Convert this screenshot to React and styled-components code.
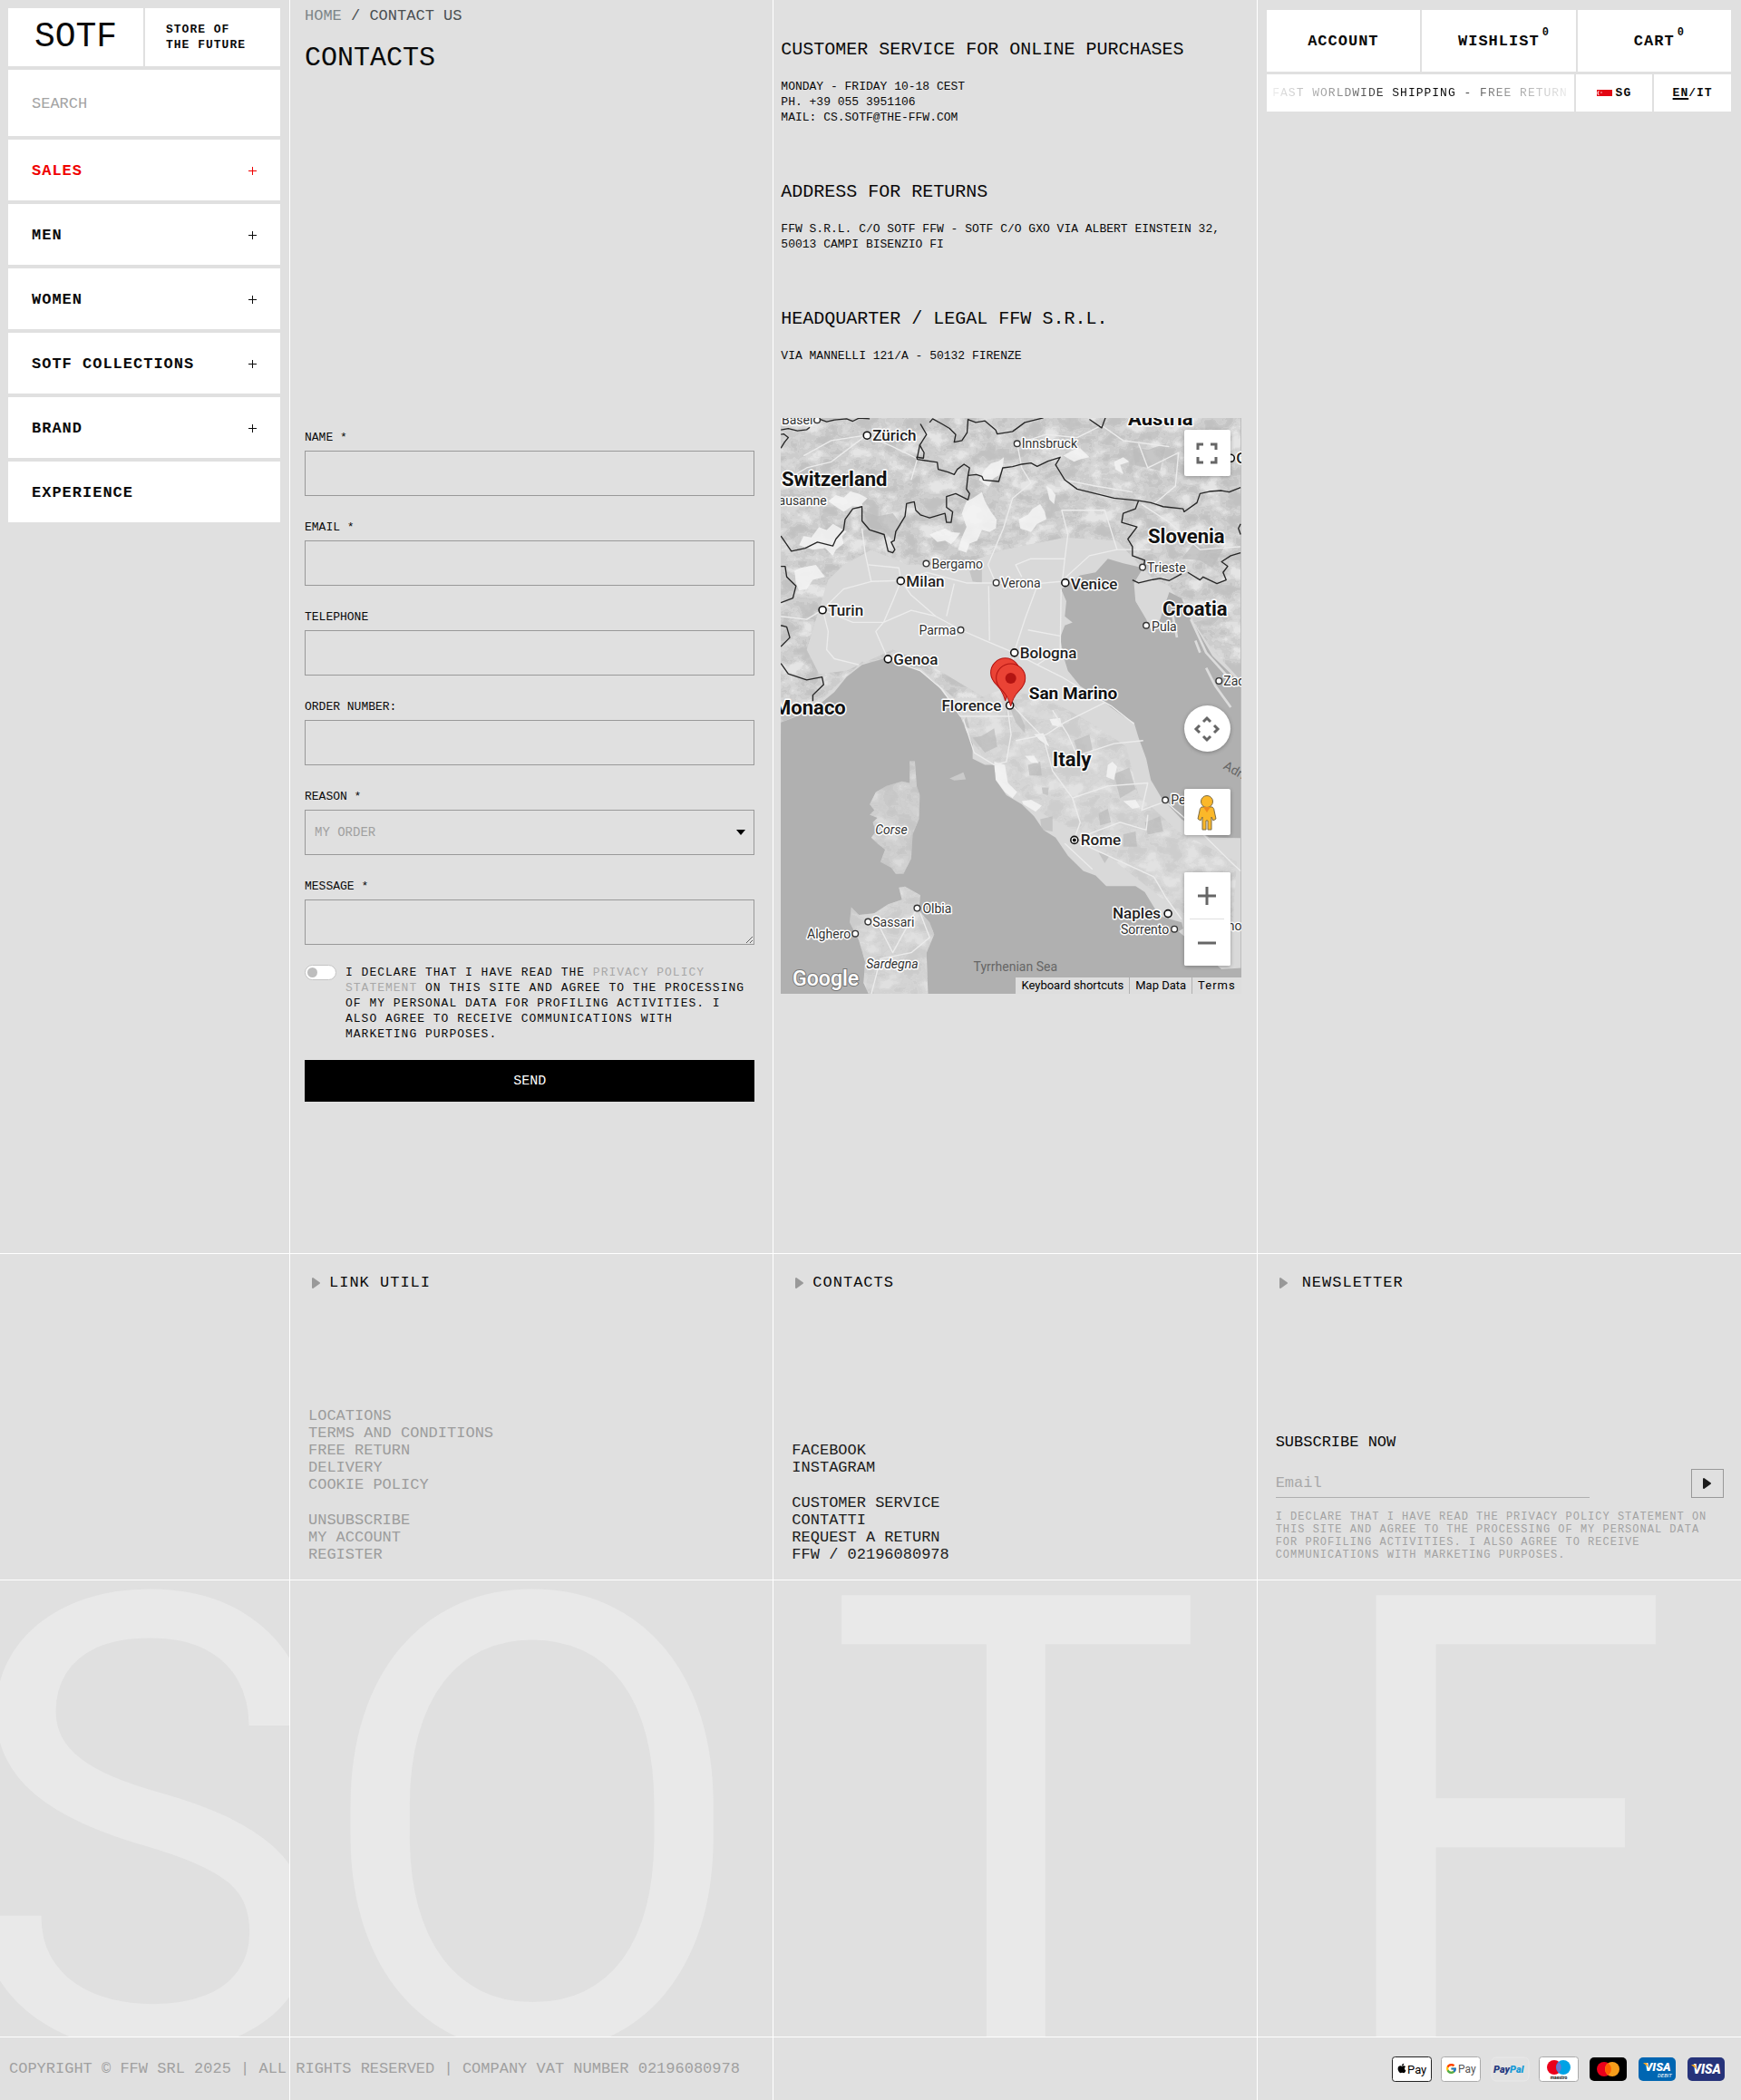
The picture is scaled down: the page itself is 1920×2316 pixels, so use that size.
import React from "react";
import styled, { createGlobalStyle, css } from "styled-components";
import { FaApple } from "react-icons/fa";
import { FcGoogle } from "react-icons/fc";

const GlobalStyle = createGlobalStyle`
    *, *::before, *::after {
        box-sizing: border-box;
    }
    body {
        margin: 0;
        background: #e0e0e0;
        color: #0a0a0a;
        font-family: "Liberation Mono", monospace;
        font-size: 13px;
        line-height: 17px;
    }
    a {
        color: inherit;
        text-decoration: none;
    }
    h1, h2, h3, p, ul {
        margin: 0;
        padding: 0;
        font-weight: 400;
    }
    ul {
        list-style: none;
    }
    button, input, select, textarea {
        font-family: inherit;
        color: inherit;
        border-radius: 0;
        margin: 0;
    }
    button {
        cursor: pointer;
    }
`

const columns = css`
    display: grid;
    grid-template-columns: 3fr 5fr 5fr 5fr;
`

const Page = styled.div`
    position: relative;
`
const GridLines = styled.div`
    ${columns}
    position: absolute;
    inset: 0;
    pointer-events: none;
    span {
        border-right: 1px solid #fff;
    }
    span:last-child {
        border-right: none;
    }
`
const Main = styled.main`
    ${columns}
    border-bottom: 1px solid #fff;
    > * {
        min-width: 0;
    }
`

/* left menu */
const Sidebar = styled.nav`
    display: flex;
    flex-direction: column;
    gap: 4px;
    padding: 9px 11px 0 9px;
`
const Brand = styled.div`
    display: grid;
    grid-template-columns: 1fr 1fr;
    gap: 2px;
    height: 64px;
    a {
        display: flex;
        align-items: center;
        background: #fff;
    }
`
const Logo = styled.a`
    justify-content: center;
    font-size: 38px;
    line-height: 44px;
`
const Claim = styled.a`
    padding-left: 23px;
    font-weight: 700;
    letter-spacing: 1px;
`
const Search = styled.input`
    height: 73px;
    padding: 2px 26px 0;
    border: none;
    background: #fff;
    font-size: 17px;
    &::placeholder {
        color: #a3a3a3;
        opacity: 1;
    }
`
const MenuItem = styled.button`
    display: flex;
    align-items: center;
    justify-content: space-between;
    height: 67px;
    padding: 2px 26px 0;
    border: none;
    background: #fff;
    color: ${({ $sale }) => ($sale ? "#f00000" : "#0a0a0a")};
    font-size: 17px;
    font-weight: 700;
    letter-spacing: 1px;
    svg {
        width: 9px;
        height: 9px;
    }
`

/* contact form */
const FormColumn = styled.section`
    padding: 8px 21px 167px 16px;
`
const Breadcrumb = styled.nav`
    font-size: 17px;
    line-height: 20px;
    color: #4a4f52;
    a {
        color: #7c8588;
    }
`
const Title = styled.h1`
    margin-top: 15px;
    font-size: 30px;
    line-height: 42px;
`
const ContactForm = styled.form`
    display: flex;
    flex-direction: column;
    margin-top: 388px;
`
const Fields = styled.div`
    display: flex;
    flex-direction: column;
    gap: 25px;
`
const Field = styled.div`
    display: flex;
    flex-direction: column;
    gap: 4px;
    label {
        line-height: 20px;
    }
`
const boxStyle = css`
    width: 100%;
    height: 50px;
    padding: 0 10px;
    border: 1px solid #999;
    background: transparent;
    font-size: 14px;
`
const Box = styled.input`
    ${boxStyle}
`
const TextArea = styled.textarea`
    ${boxStyle}
    padding: 10px;
    resize: vertical;
    display: block;
`
const SelectWrap = styled.div`
    position: relative;
    select {
        ${boxStyle}
        appearance: none;
        color: #a0a0a0;
    }
    svg {
        position: absolute;
        right: 10px;
        top: 22px;
        pointer-events: none;
    }
`
const Consent = styled.div`
    display: flex;
    align-items: flex-start;
    gap: 10px;
    margin-top: 22px;
    label {
        flex: 1;
        padding-right: 4px;
        letter-spacing: 1px;
    }
    a {
        color: #a8a8a8;
    }
`
const Toggle = styled.input`
    appearance: none;
    flex: none;
    display: flex;
    align-items: center;
    width: 35px;
    height: 17px;
    padding: 2px;
    border: 1px solid #c4c4c4;
    border-radius: 9px;
    background: #fff;
    cursor: pointer;
    &::before {
        content: "";
        width: 11px;
        height: 11px;
        border-radius: 50%;
        background: #bdbdbd;
    }
    &:checked {
        justify-content: flex-end;
    }
`
const Send = styled.button`
    height: 46px;
    margin-top: 20px;
    border: none;
    background: #000;
    color: #fff;
    font-size: 15px;
`

/* addresses and map */
const InfoColumn = styled.section`
    padding: 41px 18px 0 8px;
`
const InfoBlock = styled.div`
    margin-bottom: 60px;
    h2 {
        margin-bottom: 18px;
        font-size: 20px;
        line-height: 28px;
    }
`
const MapFrame = styled.div`
    position: relative;
    height: 635px;
    overflow: hidden;
    background: #b0b0b0;
    font-family: Roboto, sans-serif;
    > svg {
        display: block;
        width: 100%;
        height: 100%;
    }
`
const MapControls = styled.div`
    position: absolute;
    top: 13px;
    right: 12px;
    bottom: 31px;
    width: 51px;
    display: flex;
    flex-direction: column;
    gap: 41px;
`
const MapButton = styled.button`
    display: flex;
    align-items: center;
    justify-content: center;
    width: 51px;
    height: 51px;
    padding: 0;
    border: none;
    border-radius: ${({ $round }) => ($round ? "50%" : "2px")};
    background: #fff;
    box-shadow: 0 1px 4px rgba(0, 0, 0, 0.3);
    &:first-child {
        margin-bottom: auto;
    }
`
const ZoomGroup = styled.div`
    background: #fff;
    border-radius: 2px;
    box-shadow: 0 1px 4px rgba(0, 0, 0, 0.3);
    hr {
        width: 38px;
        height: 1px;
        margin: 0 auto;
        border: none;
        background: #e0e0e0;
    }
    button {
        box-shadow: none;
    }
`
const MapTerms = styled.div`
    position: absolute;
    right: 0;
    bottom: 0;
    display: flex;
    gap: 1px;
    background: #b0b0b0;
    button, a {
        height: 18px;
        padding: 0 6px;
        border: none;
        background: #dedede;
        color: #000;
        font-size: 13px;
        font-weight: 400;
        line-height: 18px;
    }
    a {
        letter-spacing: 1px;
    }
`

/* account bar */
const AccountColumn = styled.section`
    display: flex;
    flex-direction: column;
    gap: 3px;
    padding: 11px 11px 0 10px;
`
const AccountRow = styled.div`
    display: grid;
    grid-template-columns: ${({ $cols }) => $cols};
    gap: 2px;
    height: ${({ $height }) => $height}px;
`
const Cell = styled.div`
    display: flex;
    align-items: center;
    justify-content: center;
    gap: 4px;
    min-width: 0;
    background: #fff;
    font-size: ${({ $size }) => $size}px;
    font-weight: ${({ $light }) => ($light ? 400 : 700)};
    letter-spacing: 1px;
    a {
        position: relative;
    }
    u {
        text-underline-offset: 2px;
        text-decoration-thickness: 2px;
    }
`
const Badge = styled.sup`
    position: absolute;
    left: 100%;
    top: -9px;
    padding-left: 3px;
    font-size: 12px;
    line-height: 16px;
`
const Ticker = styled.p`
    white-space: nowrap;
    mask-image: linear-gradient(90deg, rgba(0, 0, 0, 0.08) 0%, rgba(0, 0, 0, 0.5) 25%, #000 42%, #000 60%, rgba(0, 0, 0, 0.5) 75%, rgba(0, 0, 0, 0.08) 100%);
`

/* footer */
const FooterTop = styled.div`
    ${columns}
    height: 360px;
    border-bottom: 1px solid #fff;
`
const FooterColumn = styled.section`
    display: flex;
    flex-direction: column;
    justify-content: space-between;
    min-width: 0;
    padding: 21px 19px 18px 20px;
`
const FooterTitle = styled.h3`
    display: flex;
    align-items: center;
    gap: ${({ $gap }) => $gap}px;
    padding-left: 4px;
    font-size: 17px;
    line-height: 22px;
    letter-spacing: 1px;
`
const FooterLinks = styled.div`
    display: flex;
    flex-direction: column;
    gap: 20px;
    font-size: 17px;
    line-height: 19px;
    color: ${({ $muted }) => ($muted ? "#9c9c9c" : "#1c1c1c")};
`
const NewsletterForm = styled.form`
    font-size: 17px;
    > label {
        display: block;
        margin-bottom: 20px;
        line-height: 19px;
    }
    p {
        margin-top: 14px;
        padding-bottom: 2px;
        color: #a3a3a3;
        font-size: 12px;
        line-height: 14px;
        letter-spacing: 1px;
    }
`
const NewsletterRow = styled.div`
    display: flex;
    justify-content: space-between;
    input {
        width: 70%;
        height: 32px;
        padding: 0;
        border: none;
        border-bottom: 1px solid #b0b0b0;
        background: transparent;
        font-size: 17px;
    }
    input::placeholder {
        color: #a8a8a8;
        opacity: 1;
    }
    button {
        display: flex;
        align-items: center;
        justify-content: center;
        width: 36px;
        height: 32px;
        padding: 0;
        border: 1px solid #999;
        background: transparent;
    }
`
const BigLetters = styled.div`
    ${columns}
    height: 504px;
    overflow: hidden;
    border-bottom: 1px solid #fff;
    color: #e9e9e9;
    font-family: Roboto, sans-serif;
    font-size: 700px;
    font-weight: 450;
    line-height: 550px;
    span {
        display: flex;
        justify-content: center;
        min-width: 0;
        overflow: hidden;
    }
`
const FooterBottom = styled.div`
    display: flex;
    align-items: center;
    justify-content: space-between;
    height: 69px;
    padding: 0 17px 0 10px;
    color: #a0a0a0;
    font-size: 17px;
`
const Payments = styled.ul`
    display: flex;
    gap: 10px;
    svg {
        display: block;
        font-family: Roboto, sans-serif;
    }
`

const menu = [
    { label: "SALES", plus: true, sale: true },
    { label: "MEN", plus: true },
    { label: "WOMEN", plus: true },
    { label: "SOTF COLLECTIONS", plus: true },
    { label: "BRAND", plus: true },
    { label: "EXPERIENCE" },
]

const usefulLinks = [
    ["LOCATIONS", "TERMS AND CONDITIONS", "FREE RETURN", "DELIVERY", "COOKIE POLICY"],
    ["UNSUBSCRIBE", "MY ACCOUNT", "REGISTER"],
]

const contactLinks = [
    ["FACEBOOK", "INSTAGRAM"],
    ["CUSTOMER SERVICE", "CONTATTI", "REQUEST A RETURN", "FFW / 02196080978"],
]

const countries = [
    ["Switzerland", 1, 76],
    ["Austria", 382, 9],
    ["Slovenia", 404, 138],
    ["Croatia", 420, 218],
    ["Italy", 299, 384],
    ["Monaco", -8, 327],
]

const bigCities = [
    ["Zürich", 101, 26, 95, 20],
    ["Graz", 501, 51, 495, 45],
    ["Milan", 138, 186, 132, 180],
    ["Venice", 319, 189, 313, 182],
    ["Turin", 52, 218, 46, 212],
    ["Genoa", 124, 272, 118, 266],
    ["Bologna", 263, 265, 257, 259],
    ["Florence", 177, 323, 252, 317],
    ["Naples", 365, 551, 426, 546],
    ["Rome", 330, 471, 323, 465],
]

const smallCities = [
    ["Basel", 1, 8, 40, 3],
    ["Innsbruck", 265, 34, 260, 29],
    ["Lausanne", -10, 97, -20, 90],
    ["Trieste", 403, 170, 398, 165],
    ["Pula", 408, 235, 402, 229],
    ["Bergamo", 166, 166, 160, 161],
    ["Verona", 242, 187, 237, 182],
    ["Parma", 152, 239, 198, 234],
    ["Zadar", 487, 295, 482, 290],
    ["Pescara", 429, 426, 423, 421],
    ["Sorrento", 374, 568, 433, 563],
    ["Salerno", 460, 564, 454, 558],
    ["Sassari", 101, 560, 96, 555],
    ["Olbia", 156, 545, 150, 540],
    ["Alghero", 29, 573, 82, 568],
]

const borders = [
    "140,45 165,40 185,48 210,42 250,38 270,46 290,36 325,38",
    "36,75 60,70 90,78 120,74 130,66",
    "36,135 48,115 60,100 45,88 36,90",
    "520,50 530,38 560,55 585,70 605,90 600,115 625,110 642,84 645,40 670,50 700,45 735,75 740,88 790,80 830,50 890,35",
    "1040,40 1080,68 1092,35",
    "490,55 510,90 488,125 502,150 500,168 478,165 480,172 545,182 548,205 580,214 600,222 610,205 632,188 650,200 645,225 672,222 690,228 695,240 745,245 758,200 790,196 820,188 850,184 870,195 905,178 945,165 930,190 945,215 960,240 1000,270 1060,285 1120,300 1200,308 1240,315 1280,328 1345,335 1348,345 1390,315 1400,285 1430,278 1470,275 1495,280 1532,265",
    "488,125 480,165",
    "645,225 640,270 650,285 645,305 605,285 575,295 575,330 595,345 590,380 575,380 570,350 520,365 490,355 475,340 470,312 445,318 440,360 410,410 405,440 395,445 407,470 400,480 385,475 372,420 325,405 300,375 300,328 270,335 245,370 240,405 215,435 205,458 155,445 115,465 70,475 36,425",
    "36,525 50,525 55,560 85,590 75,630 36,645",
    "36,720 55,725 65,760 36,790",
    "36,845 60,880 120,900 170,890 175,915 140,950 140,970",
    "1200,308 1190,335 1150,350 1145,380 1195,395 1165,435 1180,460 1180,490 1220,505 1215,540",
    "1180,570 1200,580 1240,570 1270,565 1300,572 1340,550",
    "1360,545 1400,570 1410,560 1455,582 1485,570 1475,545 1490,525 1470,510 1500,490 1532,480",
    "1532,385 1525,400 1532,420",
]

const roads = [
    "36,690 120,700 172,668 240,600 330,575 427,572 510,545 640,580 735,580 840,585 948,575 1040,490 1130,470 1240,470",
    "427,572 460,620 540,690 622,735 700,770 795,810 870,850 950,890 1040,945 1110,985 1185,1045",
    "172,668 190,740 185,800 210,830 290,850",
    "172,668 270,710 370,710 345,740 384,830",
    "427,572 400,640 370,710 460,670 540,690",
    "330,575 310,480 300,400",
    "427,572 420,530 320,520",
    "600,582 575,690",
    "712,590 715,770",
    "735,580 710,520 760,400 790,300 850,250 820,200 805,120",
    "870,590 830,700 795,810",
    "820,560 800,520 850,500 960,500 950,590",
    "960,500 970,420 950,340 1090,340 1130,470",
    "948,600 945,800 870,850",
    "840,735 945,755",
    "795,810 780,900 790,985 890,1090 920,1200 985,1290 1010,1370 990,1428",
    "384,830 490,870 560,930 620,1020 790,1020",
    "630,1030 665,1140 730,1180 770,1170 785,1080 775,1000",
    "800,1100 900,1080 960,1040 1090,975",
    "920,1000 970,1080 1000,1150 1120,1110 1215,1100",
    "985,1290 1100,1250 1230,1240 1210,1330 1290,1300",
    "990,1428 1060,1400 1140,1370 1225,1395 1230,1345",
    "990,1428 1100,1480 1250,1550 1290,1620 1340,1690",
    "960,1440 1050,1525",
    "1275,1290 1400,1400 1500,1500 1532,1530",
    "110,160 200,110 315,92 400,130 480,170 460,240",
    "36,250 120,200 200,180 315,92",
    "805,120 900,90 1000,100 1080,60 1150,110 1300,130",
    "1200,120 1230,200 1330,150 1320,260 1250,320",
    "1210,320 1300,380 1400,470 1532,460",
    "960,240 1060,260 1180,280",
    "479,1655 400,1800 350,1700 319,1699",
    "490,1670 520,1750 460,1800 360,1820 330,1938",
]

const glaciers = [
    "95,455 110,425 135,430 160,395 185,405 205,385 250,410 235,425 240,450 215,470 205,490 180,465 140,470",
    "190,310 215,290 240,298 262,278 290,285 318,300 300,318 305,335 270,325 240,345 225,335",
    "680,240 700,205 720,185 745,178 762,165 758,195 745,225 728,235 712,262",
    "640,310 660,300 690,280 700,310 720,345 738,370 736,400 715,412 690,405 675,440 650,450 640,480 612,470 625,430 640,395 625,350",
    "520,420 540,412 570,400 590,412 620,415 605,435 590,452 570,440 545,445",
    "810,370 840,355 855,335 880,320 895,345 900,370 870,385 850,412 815,400",
    "955,160 980,145 1010,135 1040,165 1010,172 990,180",
    "1120,180 1150,165 1170,180 1140,190 1150,220 1125,205",
    "80,540 100,530 150,520 180,560 140,570 120,600 95,605 85,580",
    "900,260 915,270 930,290 925,320 910,305",
    "730,1170 765,1180 775,1240 805,1270 790,1290 765,1270 735,1230",
    "820,1300 850,1295 885,1315 865,1335 825,1310",
    "860,1080 890,1075 910,1120 880,1100",
    "910,1030 945,1025 950,1055 920,1050",
    "1100,1180 1115,1170 1130,1185 1120,1230 1095,1220",
    "1150,1300 1190,1295 1205,1320 1180,1325",
    "830,1150 860,1150 875,1175 850,1172",
]

const forests = [
    "300,340 350,360 400,350 430,390 400,440 370,405 330,400",
    "650,540 690,530 690,580 660,575",
    "780,985 800,985 830,1050 830,1075 800,1040",
    "660,1090 690,1085 730,1060 740,1120 700,1140",
    "640,1020 650,1060 625,1050",
    "840,1180 880,1170 885,1215 845,1215",
    "885,1255 908,1255 905,1280 888,1275",
    "1120,1210 1170,1190 1190,1260 1140,1290",
    "990,1100 1040,1080 1050,1130 1010,1160",
    "1070,1340 1100,1325 1110,1370 1075,1380",
    "1220,1370 1270,1350 1280,1400 1230,1410",
    "880,1360 920,1350 920,1400 885,1395",
    "1150,1410 1190,1400 1195,1450 1150,1450",
    "1070,1470 1105,1480 1090,1505",
    "1380,450 1430,470 1480,460 1440,530 1400,505 1340,500",
    "1180,130 1230,140 1290,120 1270,210 1190,190",
    "400,1740 418,1745 395,1785 380,1780",
]

const alps = "36,30 1532,30 1532,900 1440,800 1300,590 1240,560 1130,440 960,430 760,470 620,520 450,520 330,470 240,520 190,570 150,700 120,800 160,880 250,870 400,800 520,850 700,960 600,960 490,860 300,840 130,1000 36,1040"
const apennines = "620,980 760,930 900,960 1060,1050 1160,1120 1200,1280 1330,1400 1520,1500 1500,1800 1300,1640 1000,1400 900,1350 760,1240 640,1080"
const adriatic = "948,600 1010,555 1060,545 1100,500 1150,515 1215,530 1185,580 1190,640 1225,700 1240,735 1270,700 1300,610 1340,630 1370,700 1400,750 1440,820 1490,870 1532,910 1532,1422 1430,1420 1340,1360 1275,1290 1240,1230 1225,1160 1200,1090 1185,1040 1150,1020 1090,975 1010,920 970,870 955,820 945,760 960,720 985,710 960,690 965,640"
const tyrrhenian = "36,1040 75,1025 150,990 210,940 250,890 300,850 370,830 430,840 490,870 540,910 570,950 610,985 620,1020 640,1070 660,1110 660,1160 700,1180 730,1180 735,1230 770,1280 820,1310 860,1350 890,1395 930,1420 970,1480 1020,1530 1060,1545 1095,1580 1190,1580 1220,1600 1250,1650 1270,1680 1340,1700 1345,1720 1330,1730 1400,1790 1470,1855 1540,1850 1540,1945 30,1945"
const corse = "455,1168 472,1168 478,1250 488,1280 485,1360 465,1410 460,1490 435,1540 410,1540 395,1520 360,1500 375,1460 350,1440 330,1420 345,1400 335,1370 350,1355 325,1345 340,1330 325,1310 345,1270 380,1250 430,1235 455,1240"
const sardegna = "420,1585 440,1582 490,1610 485,1660 520,1700 535,1740 510,1800 515,1945 325,1945 305,1900 310,1830 290,1760 260,1700 265,1650 290,1675 340,1670 385,1640 430,1625"

const pinPath = "M0 0C-2 -8 -4 -12 -9 -17C-13 -21 -16 -25 -16 -31A16 16 0 0 1 16 -31C16 -25 13 -21 9 -17C4 -12 2 -8 0 0Z"

const mapScale = "translate(-12 -11) scale(.338 .3333)"
const reliefSteps = ".74 .74 .75 .77 .82 .8 .85 .87 .91 .94 .94"

const Triangle = ({ color }) => (
    <svg width="9" height="14" viewBox="0 0 9 14" aria-hidden="true">
        <path d="M1 2V12L8 7Z" fill={color} stroke={color} strokeWidth="2" strokeLinejoin="round" />
    </svg>
)

const MapDrawing = () => (
    <svg viewBox="0 0 506 635" preserveAspectRatio="xMidYMid slice" role="img" aria-label="Map of Italy">
        <defs>
            <filter id="relief" x="0" y="0" width="100%" height="100%" colorInterpolationFilters="sRGB">
                <feTurbulence type="fractalNoise" baseFrequency="0.045 0.06" numOctaves="4" seed="8" />
                <feColorMatrix values="1.6 0 0 0 -0.3  1.6 0 0 0 -0.3  1.6 0 0 0 -0.3  0 0 0 0 1" />
                <feComponentTransfer>
                    <feFuncR type="discrete" tableValues={reliefSteps} />
                    <feFuncG type="discrete" tableValues={reliefSteps} />
                    <feFuncB type="discrete" tableValues={reliefSteps} />
                </feComponentTransfer>
            </filter>
            <clipPath id="mountains">
                <polygon points={alps} transform={mapScale} />
            </clipPath>
            <clipPath id="hills">
                <polygon points={apennines} transform={mapScale} />
            </clipPath>
            <clipPath id="islands">
                <polygon points={corse} transform={mapScale} />
                <polygon points={sardegna} transform={mapScale} />
            </clipPath>
        </defs>
        <rect width="506" height="635" fill="#d9d9d9" />
        <g clipPath="url(#mountains)">
            <rect width="506" height="635" fill="#cdcdcd" />
            <rect width="506" height="635" filter="url(#relief)" opacity="0.7" />
        </g>
        <g clipPath="url(#hills)">
            <rect width="506" height="635" filter="url(#relief)" opacity="0.4" />
        </g>
        <g transform={mapScale}>
            {forests.map((points) => <polygon key={points} points={points} fill="#bababa" opacity="0.7" />)}
            {glaciers.map((points) => <polygon key={points} points={points} fill="#f4f4f4" opacity="0.85" />)}
            <polygon points={adriatic} fill="#b0b0b0" />
            <polygon points={tyrrhenian} fill="#b0b0b0" />
            <polygon points={corse} fill="#cdcdcd" />
            <polygon points={sardegna} fill="#d6d6d6" />
            <polygon points="585,1225 630,1205 638,1228 600,1232" fill="#cacaca" />
            <g fill="none" stroke="#dcdcdc" strokeWidth="8">
                <path d="M1310 680L1325 760M1370 700L1420 810L1500 900M1385 770L1400 810M1420 860L1450 920L1500 990" />
            </g>
        </g>
        <g clipPath="url(#islands)">
            <rect width="506" height="635" filter="url(#relief)" opacity="0.4" />
        </g>
        <g transform={mapScale} fill="none" strokeLinejoin="round">
            {roads.map((points) => <polyline key={points} points={points} stroke="#ececec" strokeWidth="4" />)}
            {borders.map((points) => <polyline key={points} points={points} stroke="#262626" strokeWidth="4" />)}
        </g>
        <g stroke="#fff" strokeWidth="3" paintOrder="stroke" strokeLinejoin="round">
            <g fill="#333" fontSize="14">
                {smallCities.map(([name, x, y]) => <text key={name} x={x} y={y}>{name}</text>)}
            </g>
            <g fill="#222" fontSize="17" fontWeight="500">
                {bigCities.map(([name, x, y]) => <text key={name} x={x} y={y}>{name}</text>)}
            </g>
            <g fill="#111" fontSize="22" fontWeight="700">
                {countries.map(([name, x, y]) => <text key={name} x={x} y={y}>{name}</text>)}
                <text x="273" y="310" fontSize="19">San Marino</text>
            </g>
            <g fill="#333" fontSize="14" fontStyle="italic">
                <text x="104" y="459">Corse</text>
                <text x="94" y="606">Sardegna</text>
            </g>
        </g>
        <g fill="#666" fontSize="14">
            <text x="212" y="609">Tyrrhenian Sea</text>
            <text transform="translate(486 386) rotate(30)">Adriatic Sea</text>
        </g>
        <g fill="#fff" stroke="#333" strokeWidth="1.4">
            {smallCities.map(([name, , , cx, cy]) => <circle key={name} cx={cx} cy={cy} r="3.3" />)}
            {bigCities.map(([name, , , cx, cy]) => <circle key={name} cx={cx} cy={cy} r="4" stroke="#111" strokeWidth="1.6" />)}
        </g>
        <circle cx="323" cy="465" r="2" fill="#111" />
        <g fill="#ea4335" stroke="#b31412" strokeWidth="1">
            <path d={pinPath} transform="translate(247 312)" />
            <path d={pinPath} transform="translate(253 318)" />
        </g>
        <circle cx="253" cy="287" r="6" fill="#b31412" />
        <text x="13" y="625" fontSize="23" fontWeight="500" fill="#fff" stroke="#777" strokeWidth="2" paintOrder="stroke">Google</text>
    </svg>
)

const ContactMap = () => (
    <MapFrame>
        <MapDrawing />
        <MapControls>
            <MapButton type="button" aria-label="Toggle fullscreen view">
                <svg width="24" height="24" viewBox="0 0 24 24" fill="none" stroke="#666" strokeWidth="3">
                    <path d="M2 8V2H8M16 2H22V8M22 16V22H16M8 22H2V16" />
                </svg>
            </MapButton>
            <MapButton type="button" $round aria-label="Map camera controls">
                <svg width="30" height="30" viewBox="0 0 30 30" fill="none" stroke="#666" strokeWidth="3">
                    <path d="M11 7L15 3L19 7M11 23L15 27L19 23M7 11L3 15L7 19M23 11L27 15L23 19" />
                </svg>
            </MapButton>
            <MapButton type="button" aria-label="Street View">
                <svg width="22" height="40" viewBox="0 0 22 40" fill="#fbb829" stroke="#7a6a45" strokeWidth="1">
                    <path d="M5 14H17C18 15 19 16 19 18L21 27L18 29L16 25V39H12V29H10V39H6V25L4 29L1 27L3 18C3 16 4 15 5 14Z" />
                    <circle cx="11" cy="8" r="6.5" />
                    <path d="M7 14H15L11 20Z" fill="#ee8a1d" stroke="none" />
                </svg>
            </MapButton>
            <ZoomGroup>
                <MapButton type="button" aria-label="Zoom in">
                    <svg width="22" height="22" viewBox="0 0 22 22" stroke="#666" strokeWidth="3">
                        <path d="M1 11H21M11 1V21" />
                    </svg>
                </MapButton>
                <hr />
                <MapButton type="button" aria-label="Zoom out">
                    <svg width="22" height="22" viewBox="0 0 22 22" stroke="#666" strokeWidth="3">
                        <path d="M1 11H21" />
                    </svg>
                </MapButton>
            </ZoomGroup>
        </MapControls>
        <MapTerms>
            <button type="button">Keyboard shortcuts</button>
            <button type="button">Map Data</button>
            <a href="#terms">Terms</a>
        </MapTerms>
    </MapFrame>
)

const Card = ({ label, fill, stroke, small, children }) => (
    <li>
        <svg width="44" height="28" viewBox="0 0 44 28" role="img" aria-label={label}>
            {small
                ? <rect x="2" y="1" width="41" height="26" rx="5" fill={fill} stroke={stroke} />
                : <rect x="0.5" y="0.5" width="43" height="27" rx="3" fill={fill} stroke={stroke} />}
            {children}
        </svg>
    </li>
)

const PaymentList = () => (
    <Payments>
        <Card label="Apple Pay" fill="#fff" stroke="#222">
            <FaApple x="5" y="7" size={12} color="#000" />
            <text x="17" y="19" fontSize="13" fill="#000">Pay</text>
        </Card>
        <Card label="Google Pay" fill="#fff" stroke="#aaa">
            <FcGoogle x="5" y="7" size={13} />
            <text x="19" y="18" fontSize="12" fill="#555">Pay</text>
        </Card>
        <Card label="PayPal" fill="#e2e2e2" stroke="#e9e9e9" small>
            <text x="4" y="18" fontSize="11" fontWeight="900" fontStyle="italic" fill="#253b80">
                Pay<tspan fill="#179bd7">Pal</tspan>
            </text>
        </Card>
        <Card label="Maestro" fill="#fff" stroke="#aaa">
            <circle cx="17" cy="12" r="8" fill="#eb001b" />
            <circle cx="27" cy="12" r="8" fill="#00a2e5" />
            <path d="M22 6A8 8 0 0 1 22 18A8 8 0 0 1 22 6Z" fill="#7375cf" />
            <text x="22" y="25" fontSize="5" fontWeight="700" textAnchor="middle" fill="#111">maestro</text>
        </Card>
        <Card label="Mastercard" fill="#000" small>
            <circle cx="18" cy="14" r="8" fill="#eb001b" />
            <circle cx="27" cy="14" r="8" fill="#f79e1b" />
            <path d="M22.500 7.500A8 8 0 0 1 22.500 20.500A8 8 0 0 1 22.500 7.500Z" fill="#ff5f00" />
        </Card>
        <Card label="Visa Debit" fill="#0066b2" small>
            <text x="9" y="16" fontSize="13" fontWeight="900" fontStyle="italic" fill="#fff">VISA</text>
            <path d="M7 7H11L13 12Z" fill="#f7a823" />
            <text x="23" y="23" fontSize="6" fontStyle="italic" fill="#fff">DEBIT</text>
        </Card>
        <Card label="Visa" fill="#26337a" small>
            <text x="8" y="19" fontSize="14" fontWeight="900" fontStyle="italic" fill="#fff">VISA</text>
            <path d="M6 9H10L12 14Z" fill="#f7a823" />
        </Card>
    </Payments>
)

const LinkGroups = ({ groups, muted }) => (
    <FooterLinks $muted={muted}>
        {groups.map((group) => (
            <ul key={group[0]}>
                {group.map((link) => (
                    <li key={link}><a href="#footer">{link}</a></li>
                ))}
            </ul>
        ))}
    </FooterLinks>
)

const TextField = ({ id, label, type = "text" }) => (
    <Field>
        <label htmlFor={id}>{label}</label>
        <Box type={type} id={id} name={id} />
    </Field>
)

const App = () => {
    return (
        <>
            <GlobalStyle />
            <Page>
                <Main>
                    <Sidebar>
                        <Brand>
                            <Logo href="#home">SOTF</Logo>
                            <Claim href="#home">STORE OF<br />THE FUTURE</Claim>
                        </Brand>
                        <Search type="search" placeholder="SEARCH" aria-label="Search" />
                        {menu.map((item) => (
                            <MenuItem key={item.label} type="button" $sale={item.sale}>
                                {item.label}
                                {item.plus && (
                                    <svg viewBox="0 0 9 9" stroke="currentColor" aria-hidden="true">
                                        <path d="M0 4.500H9M4.500 0V9" />
                                    </svg>
                                )}
                            </MenuItem>
                        ))}
                    </Sidebar>

                    <FormColumn>
                        <Breadcrumb><a href="#home">HOME</a> / CONTACT US</Breadcrumb>
                        <Title>CONTACTS</Title>
                        <ContactForm>
                            <Fields>
                                <TextField id="name" label="NAME *" />
                                <TextField id="email" label="EMAIL *" type="email" />
                                <TextField id="telephone" label="TELEPHONE" type="tel" />
                                <TextField id="order" label="ORDER NUMBER:" />
                                <Field>
                                    <label htmlFor="reason">REASON *</label>
                                    <SelectWrap>
                                        <select id="reason" name="reason">
                                            <option>MY ORDER</option>
                                        </select>
                                        <svg width="10" height="6" viewBox="0 0 10 6" aria-hidden="true">
                                            <path d="M0 0H10L5 6Z" fill="#000" />
                                        </svg>
                                    </SelectWrap>
                                </Field>
                                <Field>
                                    <label htmlFor="message">MESSAGE *</label>
                                    <TextArea id="message" name="message" />
                                </Field>
                            </Fields>
                            <Consent>
                                <Toggle type="checkbox" id="privacy" name="privacy" />
                                <label htmlFor="privacy">
                                    I DECLARE THAT I HAVE READ THE <a href="#privacy">PRIVACY POLICY STATEMENT</a> ON THIS SITE AND AGREE TO THE PROCESSING OF MY PERSONAL DATA FOR PROFILING ACTIVITIES. I ALSO AGREE TO RECEIVE COMMUNICATIONS WITH MARKETING PURPOSES.
                                </label>
                            </Consent>
                            <Send type="submit">SEND</Send>
                        </ContactForm>
                    </FormColumn>

                    <InfoColumn>
                        <InfoBlock>
                            <h2>CUSTOMER SERVICE FOR ONLINE PURCHASES</h2>
                            <p>
                                MONDAY - FRIDAY 10-18 CEST<br />
                                PH. +39 055 3951106<br />
                                MAIL: CS.SOTF@THE-FFW.COM
                            </p>
                        </InfoBlock>
                        <InfoBlock>
                            <h2>ADDRESS FOR RETURNS</h2>
                            <p>FFW S.R.L. C/O SOTF FFW - SOTF C/O GXO VIA ALBERT EINSTEIN 32, 50013 CAMPI BISENZIO FI</p>
                        </InfoBlock>
                        <InfoBlock>
                            <h2>HEADQUARTER / LEGAL FFW S.R.L.</h2>
                            <p>VIA MANNELLI 121/A - 50132 FIRENZE</p>
                        </InfoBlock>
                        <ContactMap />
                    </InfoColumn>

                    <AccountColumn>
                        <AccountRow $cols="1fr 1fr 1fr" $height={68}>
                            <Cell $size={17}><a href="#account">ACCOUNT</a></Cell>
                            <Cell $size={17}><a href="#wishlist">WISHLIST<Badge>0</Badge></a></Cell>
                            <Cell $size={17}><a href="#cart">CART<Badge>0</Badge></a></Cell>
                        </AccountRow>
                        <AccountRow $cols="4fr 1fr 1fr" $height={41}>
                            <Cell $size={13} $light><Ticker>FAST WORLDWIDE SHIPPING - FREE RETURN</Ticker></Cell>
                            <Cell $size={13}>
                                <svg width="17" height="7" viewBox="0 0 17 7" aria-hidden="true">
                                    <rect width="17" height="7" fill="#e30613" />
                                    <path d="M3 1A2.500 2.500 0 0 0 3 6A3 3 0 0 1 3 1Z" fill="#fff" />
                                    <circle cx="5" cy="3" r="0.700" fill="#fff" />
                                </svg>
                                SG
                            </Cell>
                            <Cell $size={13}><a href="#language"><u>EN</u>/IT</a></Cell>
                        </AccountRow>
                    </AccountColumn>
                </Main>

                <footer>
                    <FooterTop>
                        <div />
                        <FooterColumn>
                            <FooterTitle $gap={10}><Triangle color="#999" />LINK UTILI</FooterTitle>
                            <LinkGroups groups={usefulLinks} muted />
                        </FooterColumn>
                        <FooterColumn>
                            <FooterTitle $gap={10}><Triangle color="#999" />CONTACTS</FooterTitle>
                            <LinkGroups groups={contactLinks} />
                        </FooterColumn>
                        <FooterColumn>
                            <FooterTitle $gap={16}><Triangle color="#999" />NEWSLETTER</FooterTitle>
                            <NewsletterForm>
                                <label htmlFor="newsletter">SUBSCRIBE NOW</label>
                                <NewsletterRow>
                                    <input type="email" id="newsletter" placeholder="Email" />
                                    <button type="submit" aria-label="Subscribe"><Triangle color="#1c1c1c" /></button>
                                </NewsletterRow>
                                <p>I DECLARE THAT I HAVE READ THE PRIVACY POLICY STATEMENT ON THIS SITE AND AGREE TO THE PROCESSING OF MY PERSONAL DATA FOR PROFILING ACTIVITIES. I ALSO AGREE TO RECEIVE COMMUNICATIONS WITH MARKETING PURPOSES.</p>
                            </NewsletterForm>
                        </FooterColumn>
                    </FooterTop>
                    <BigLetters aria-hidden="true">
                        <span>S</span>
                        <span>O</span>
                        <span>T</span>
                        <span>F</span>
                    </BigLetters>
                    <FooterBottom>
                        <p>COPYRIGHT © FFW SRL 2025 | ALL RIGHTS RESERVED | COMPANY VAT NUMBER 02196080978</p>
                        <PaymentList />
                    </FooterBottom>
                </footer>
                <GridLines aria-hidden="true">
                    <span /><span /><span /><span />
                </GridLines>
            </Page>
        </>
    )
};

export default App;
